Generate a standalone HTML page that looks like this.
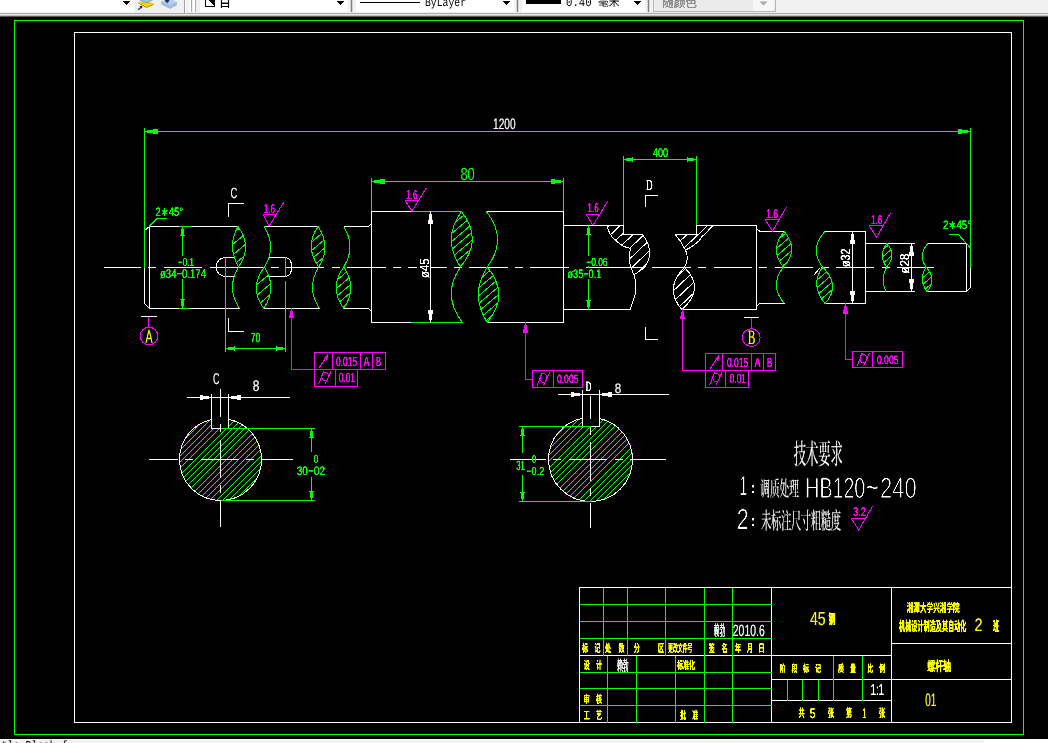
<!DOCTYPE html>
<html lang="zh-CN"><head><meta charset="utf-8"><title>螺杆轴 - CAD</title>
<style>
html,body{margin:0;padding:0;background:#000;overflow:hidden}
body{width:1048px;height:743px;position:relative}
svg{display:block}
svg text{white-space:pre}
</style></head>
<body>
<svg width="1048" height="743" viewBox="0 0 1048 743" style="position:absolute;left:0;top:0;will-change:transform" fill="none" stroke-width="1" shape-rendering="crispEdges" text-rendering="geometricPrecision">
<rect x="0" y="0" width="1048" height="743" fill="#000"/>
<rect x="14.5" y="20.5" width="1009" height="714" stroke="#00ff00"/>
<rect x="74.5" y="32.5" width="937" height="690" stroke="#ffffff"/>
<path d="M103.75 267.5H933.5" stroke="#ffffff" stroke-dasharray="38.6 7.3 8 7.2" stroke-dashoffset="1.25"/>
<rect x="571" y="266" width="15" height="3" fill="#000"/>
<rect x="417" y="266" width="13" height="3" fill="#000"/>
<path d="M209.5 267.5H225" stroke="#ffffff" />
<path d="M586 267.5H645" stroke="#ffffff" />
<path d="M144.5 303.5L144.5 230.5L149.5 226.5L238 226.5" stroke="#ffffff" />
<path d="M144.5 303.5L149.5 308.5L239.5 308.5" stroke="#ffffff" />
<path d="M149.5 226V309" stroke="#ffffff" />
<path d="M264.5 226.5H318" stroke="#ffffff" />
<path d="M263.75 308.5H319.5" stroke="#ffffff" />
<path d="M343.75 226.5L368.5 226.5L371.5 223.5" stroke="#ffffff" />
<path d="M343.75 308.5L368.5 308.5L371.5 311.5" stroke="#ffffff" />
<path d="M234 257.5H225.5A9.5 9.5 0 0 0 225.5 276.5H234" stroke="#ffffff"/>
<path d="M268.5 257.5H285.5A6.4 9.5 0 0 1 285.5 276.5H267" stroke="#ffffff"/>
<path d="M285.5 257V277" stroke="#ffffff" />
<path d="M411 211.5L371.5 211.5L371.5 322.5L411 322.5" stroke="#ffffff" />
<path d="M411 211.5H461.5" stroke="#00ff00" />
<path d="M411 322.5H462.5" stroke="#00ff00" />
<path d="M486.25 211.5L563.5 211.5L563.5 322.5L487.5 322.5" stroke="#ffffff" />
<path d="M563.5 225.5H623.5" stroke="#ffffff" />
<path d="M563.5 309.5H630" stroke="#ffffff" />
<path d="M623.5 225.5L623.5 234.5L642.4 234.5" stroke="#ffffff" />
<path d="M675.3 234.5L696.5 234.5L696.5 225.5L757 225.5" stroke="#ffffff" />
<path d="M682 309.5H757" stroke="#ffffff" />
<path d="M756.5 225.5L756.5 228.5L760 231.5L783.75 231.5" stroke="#ffffff" />
<path d="M756.5 309.5L756.5 306L760 303.5L784.5 303.5" stroke="#ffffff" />
<path d="M756.5 228V306" stroke="#ffffff" />
<path d="M823.75 231.5L865.5 231.5L865.5 303.5L825 303.5" stroke="#ffffff" />
<path d="M865.5 243.5H915" stroke="#ffffff" />
<path d="M865.5 291.5H915" stroke="#ffffff" />
<path d="M927.25 243.5L966.5 243.5L970.5 247.5L970.5 287.5L966.5 291.5L927.25 291.5" stroke="#ffffff" />
<path d="M966.5 243V292" stroke="#ffffff" />
<path d="M814 275L820 268" stroke="#ffffff" />
<clipPath id="c1"><path d="M238 226.5Q226.7 246.75 238.6 267Q252.7 246.75 238 226.5Z"/></clipPath>
<g clip-path="url(#c1)"><path d="M231.5 234.92L246.5 222.17M231.5 245.53L246.5 232.78M231.5 256.12L246.5 243.38M231.5 266.73L246.5 253.97M231.5 277.33L246.5 264.58" stroke="#00ff00"/></g>
<path d="M238 226.5Q226.7 246.75 238.6 267Q252.7 246.75 238 226.5Z" stroke="#00ff00"/>
<path d="M238.6 267Q225.95 287.75 239.5 308.5" stroke="#00ff00"/>
<path d="M264 226.5Q277 246.75 264.4 267" stroke="#00ff00"/>
<clipPath id="c2"><path d="M264.4 267Q248.525 287.75 263.75 308.5Q277.525 287.75 264.4 267Z"/></clipPath>
<g clip-path="url(#c2)"><path d="M255.3 275.39L271.8 261.37M255.3 286.00L271.8 271.97M255.3 296.60L271.8 282.57M255.3 307.20L271.8 293.17M255.3 317.79L271.8 303.77" stroke="#00ff00"/></g>
<path d="M264.4 267Q248.525 287.75 263.75 308.5Q277.525 287.75 264.4 267Z" stroke="#00ff00"/>
<clipPath id="c3"><path d="M318 226.5Q304.125 246.75 318.75 267Q331.625 246.75 318 226.5Z"/></clipPath>
<g clip-path="url(#c3)"><path d="M310.25 234.69L326 221.30M310.25 243.19L326 229.80M310.25 251.69L326 238.30M310.25 260.19L326 246.80M310.25 268.69L326 255.30M310.25 277.19L326 263.80" stroke="#00ff00"/></g>
<path d="M318 226.5Q304.125 246.75 318.75 267Q331.625 246.75 318 226.5Z" stroke="#00ff00"/>
<path d="M318.75 267Q305.875 287.75 319.5 308.5" stroke="#00ff00"/>
<path d="M343.75 226.5Q356.25 246.75 343.75 267" stroke="#00ff00"/>
<clipPath id="c4"><path d="M343.75 267Q328.75 287.75 343.75 308.5Q357.75 287.75 343.75 267Z"/></clipPath>
<g clip-path="url(#c4)"><path d="M335.25 273.54L351.75 259.51M335.25 281.54L351.75 267.51M335.25 289.54L351.75 275.51M335.25 297.54L351.75 283.51M335.25 305.54L351.75 291.51M335.25 313.54L351.75 299.51M335.25 321.54L351.75 307.51" stroke="#00ff00"/></g>
<path d="M343.75 267Q328.75 287.75 343.75 308.5Q357.75 287.75 343.75 267Z" stroke="#00ff00"/>
<clipPath id="c5"><path d="M461.5 211.5Q441.6 239.25 460.5 267Q483.6 239.25 461.5 211.5Z"/></clipPath>
<g clip-path="url(#c5)"><path d="M450.3 218.64L473.3 199.09M450.3 226.64L473.3 207.09M450.3 234.64L473.3 215.09M450.3 242.64L473.3 223.09M450.3 250.64L473.3 231.09M450.3 258.64L473.3 239.09M450.3 266.64L473.3 247.09M450.3 274.64L473.3 255.09M450.3 282.64L473.3 263.09" stroke="#00ff00"/></g>
<path d="M461.5 211.5Q441.6 239.25 460.5 267Q483.6 239.25 461.5 211.5Z" stroke="#00ff00"/>
<path d="M460.5 267Q441.15 294.75 462.4 322.5" stroke="#00ff00"/>
<path d="M486.4 211.5Q508.4 239.25 487.2 267" stroke="#00ff00"/>
<clipPath id="c6"><path d="M487.2 267Q469.6 294.75 487.2 322.5Q510.4 294.75 487.2 267Z"/></clipPath>
<g clip-path="url(#c6)"><path d="M477.4 273.41L499.8 254.37M477.4 281.21L499.8 262.17M477.4 289.01L499.8 269.97M477.4 296.81L499.8 277.77M477.4 304.61L499.8 285.57M477.4 312.41L499.8 293.37M477.4 320.21L499.8 301.17M477.4 328.01L499.8 308.97M477.4 335.81L499.8 316.77" stroke="#00ff00"/></g>
<path d="M487.2 267Q469.6 294.75 487.2 322.5Q510.4 294.75 487.2 267Z" stroke="#00ff00"/>
<clipPath id="c7"><path d="M784.2 231.5Q769 249.25 783.4 267Q799.6 249.25 784.2 231.5Z"/></clipPath>
<g clip-path="url(#c7)"><path d="M775.4 234.41L792.7 219.70M775.4 241.91L792.7 227.20M775.4 249.41L792.7 234.70M775.4 256.91L792.7 242.20M775.4 264.41L792.7 249.70M775.4 271.91L792.7 257.20M775.4 279.41L792.7 264.70" stroke="#00ff00"/></g>
<path d="M784.2 231.5Q769 249.25 783.4 267Q799.6 249.25 784.2 231.5Z" stroke="#00ff00"/>
<path d="M783.4 267Q769 285.25 784.2 303.5" stroke="#00ff00"/>
<path d="M824.8 231.5Q809.1 249.25 822.6 267" stroke="#00ff00"/>
<clipPath id="c8"><path d="M822.6 267Q809.75 285.25 825.1 303.5Q841.35 285.25 822.6 267Z"/></clipPath>
<g clip-path="url(#c8)"><path d="M815.8 273.57L833.6 258.44M815.8 281.07L833.6 265.94M815.8 288.57L833.6 273.44M815.8 296.07L833.6 280.94M815.8 303.57L833.6 288.44M815.8 311.07L833.6 295.94M815.8 318.57L833.6 303.44" stroke="#00ff00"/></g>
<path d="M822.6 267Q809.75 285.25 825.1 303.5Q841.35 285.25 822.6 267Z" stroke="#00ff00"/>
<clipPath id="c9"><path d="M886.9 243.5Q878.05 255.25 886.6 267Q897.05 255.25 886.9 243.5Z"/></clipPath>
<g clip-path="url(#c9)"><path d="M881.4 244.41L892.9 234.64M881.4 251.11L892.9 241.34M881.4 257.81L892.9 248.04M881.4 264.51L892.9 254.74M881.4 271.21L892.9 261.44" stroke="#00ff00"/></g>
<path d="M886.9 243.5Q878.05 255.25 886.6 267Q897.05 255.25 886.9 243.5Z" stroke="#00ff00"/>
<path d="M886.6 267Q880.1 279.25 886 291.5" stroke="#00ff00"/>
<path d="M927.8 243.5Q917.65 255.25 926.1 267" stroke="#00ff00"/>
<clipPath id="c10"><path d="M926.1 267Q918.05 279.25 927 291.5Q937.45 279.25 926.1 267Z"/></clipPath>
<g clip-path="url(#c10)"><path d="M921.3 272.20L933 262.25M921.3 278.90L933 268.95M921.3 285.60L933 275.65M921.3 292.30L933 282.35M921.3 299.00L933 289.05" stroke="#00ff00"/></g>
<path d="M926.1 267Q918.05 279.25 927 291.5Q937.45 279.25 926.1 267Z" stroke="#00ff00"/>
<clipPath id="wl"><path d="M606.85 225.5C608 229 609 231.5 610.1 234.1C611.8 237 614 239.3 616.5 241C618.3 242.8 620 244.4 622.2 245.5C624.5 246.8 627 247.8 629.9 248.3L630.7 249.5L629.5 252.3C629.2 254 629 256 629.1 258C629.2 260 629.5 262 629.9 263.6C630.3 265.4 630.8 267 631.5 268.5C632.2 270.8 633 273 633.9 275C636.4 273.4 638.6 271.8 640.8 270.1C642.3 269.2 643.7 268.2 644.8 266.9C646.2 265 647.3 262.8 648.1 260.4C649 258.4 649.6 256.2 649.7 253.9C649.8 251.8 649.5 249.5 648.9 247.5C648.5 245.2 647.6 243 646.4 241C645.4 238.6 644 236.5 642.4 234.5H623.5V225.5Z"/></clipPath>
<g clip-path="url(#wl)"><path d="M605 229.35L652 184.70M605 239.95L652 195.30M605 250.55L652 205.90M605 261.15L652 216.50M605 271.75L652 227.10M605 282.35L652 237.70M605 292.95L652 248.30M605 303.55L652 258.90M605 314.15L652 269.50" stroke="#ffffff"/></g>
<path d="M606.85 225.5C608 229 609 231.5 610.1 234.1C611.8 237 614 239.3 616.5 241C618.3 242.8 620 244.4 622.2 245.5C624.5 246.8 627 247.8 629.9 248.3L630.7 249.5L629.5 252.3C629.2 254 629 256 629.1 258C629.2 260 629.5 262 629.9 263.6C630.3 265.4 630.8 267 631.5 268.5C632.2 270.8 633 273 633.9 275C635.5 279 636.5 286 635.5 292.6C634.5 298 632 304 630 309.5" stroke="#ffffff"/>
<path d="M642.4 234.5C644 236.5 645.4 238.6 646.4 241C647.6 243 648.5 245.2 648.9 247.5C649.5 249.5 649.8 251.8 649.7 253.9C649.6 256.2 649 258.4 648.1 260.4C647.3 262.8 646.2 265 644.8 266.9C643.7 268.2 642.3 269.2 640.8 270.1C638.6 271.8 636.4 273.4 633.9 275" stroke="#ffffff"/>
<path d="M639 271.5L644 267.5" stroke="#ffffff" />
<clipPath id="wr"><path d="M675.3 234.5H696.5V225.5H712.9C711.8 226.6 710.8 227.7 709.7 228.8C708.4 230.3 707.2 231.8 705.9 233.3C704.6 234.3 703.4 235.4 702.1 236.4C701 237.9 700 239.4 699 240.9C697 242.7 695 244.4 692.7 245.9C690.5 247.5 688.2 248.9 685.4 250C683.8 247 682.2 244.2 680.6 241.5C678.8 239.2 677 236.9 675.3 234.5Z"/></clipPath>
<g clip-path="url(#wr)"><path d="M674 225.70L715 186.75M674 236.30L715 197.35M674 246.90L715 207.95M674 257.50L715 218.55M674 268.10L715 229.15M674 278.70L715 239.75M674 289.30L715 250.35" stroke="#ffffff"/></g>
<path d="M712.9 225.5C711.8 226.6 710.8 227.7 709.7 228.8C708.4 230.3 707.2 231.8 705.9 233.3C704.6 234.3 703.4 235.4 702.1 236.4C701 237.9 700 239.4 699 240.9C697 242.7 695 244.4 692.7 245.9C690.5 247.5 688.2 248.9 685.4 250" stroke="#ffffff"/>
<path d="M675.3 234.5C677 236.9 678.8 239.2 680.6 241.5C682.2 244.2 683.8 247 685.4 250C686.3 251.8 686.8 253.6 687 255.4C687.2 257 687.2 258.8 687 260.5C686.6 263 685.6 265.3 684.4 267.5" stroke="#ffffff"/>
<clipPath id="c11"><path d="M684.4 267.5Q663.45 288.5 681.9 309.5Q706.05 288.5 684.4 267.5Z"/></clipPath>
<g clip-path="url(#c11)"><path d="M672.3 270.22L695.6 248.08M672.3 281.02L695.6 258.88M672.3 291.82L695.6 269.68M672.3 302.62L695.6 280.48M672.3 313.42L695.6 291.28M672.3 324.22L695.6 302.08" stroke="#ffffff"/></g>
<path d="M684.4 267.5Q663.45 288.5 681.9 309.5Q706.05 288.5 684.4 267.5Z" stroke="#ffffff"/>
<path d="M144.5 128V267.5" stroke="#00ff00" />
<path d="M970.5 128V267.5" stroke="#00ff00" />
<path d="M144 131.5H971" stroke="#00ff00" />
<path d="M144.50 131.50L157.00 133.60L157.00 129.40Z" fill="#00ff00" stroke="#00ff00" stroke-width="1" stroke-linejoin="miter"/>
<path d="M970.50 131.50L958.00 129.40L958.00 133.60Z" fill="#00ff00" stroke="#00ff00" stroke-width="1" stroke-linejoin="miter"/>
<path d="M371.5 178V211" stroke="#00ff00" />
<path d="M563.5 178V211" stroke="#00ff00" />
<path d="M371 181.5H564" stroke="#00ff00" />
<path d="M371.50 181.50L384.00 183.60L384.00 179.40Z" fill="#00ff00" stroke="#00ff00" stroke-width="1" stroke-linejoin="miter"/>
<path d="M563.50 181.50L551.00 179.40L551.00 183.60Z" fill="#00ff00" stroke="#00ff00" stroke-width="1" stroke-linejoin="miter"/>
<path d="M623.5 156V225" stroke="#00ff00" />
<path d="M696.5 156V225" stroke="#00ff00" />
<path d="M623 159.5H697" stroke="#00ff00" />
<path d="M623.50 159.50L632.50 161.10L632.50 157.90Z" fill="#00ff00" stroke="#00ff00" stroke-width="1" stroke-linejoin="miter"/>
<path d="M696.50 159.50L687.50 157.90L687.50 161.10Z" fill="#00ff00" stroke="#00ff00" stroke-width="1" stroke-linejoin="miter"/>
<path d="M225.5 257V352" stroke="#00ff00" />
<path d="M285.5 257V277" stroke="#00ff00" />
<path d="M285.5 281V352" stroke="#00ff00" />
<path d="M225 348.5H286" stroke="#00ff00" />
<path d="M225.50 348.50L234.50 350.10L234.50 346.90Z" fill="#00ff00" stroke="#00ff00" stroke-width="1" stroke-linejoin="miter"/>
<path d="M285.50 348.50L276.50 346.90L276.50 350.10Z" fill="#00ff00" stroke="#00ff00" stroke-width="1" stroke-linejoin="miter"/>
<path d="M179 226.5H191" stroke="#00ff00" />
<path d="M179 308.5H190" stroke="#00ff00" />
<path d="M182.5 226V256" stroke="#00ff00" />
<path d="M182.5 278V308" stroke="#00ff00" />
<path d="M182.50 226.50L180.90 235.50L184.10 235.50Z" fill="#00ff00" stroke="#00ff00" stroke-width="1" stroke-linejoin="miter"/>
<path d="M182.50 308.50L184.10 299.50L180.90 299.50Z" fill="#00ff00" stroke="#00ff00" stroke-width="1" stroke-linejoin="miter"/>
<rect x="180" y="268" width="5" height="11" fill="#000"/>
<path d="M167 218.5L157 218.5L149 226.5" stroke="#00ff00" />
<path d="M948.5 234.5L958.5 234.5L970 247.5" stroke="#00ff00" />
<path d="M430.5 211V322" stroke="#ffffff" />
<path d="M430.50 211.50L428.40 223.50L432.60 223.50Z" fill="#ffffff" stroke="#ffffff" stroke-width="1" stroke-linejoin="miter"/>
<path d="M430.50 322.50L432.60 310.50L428.40 310.50Z" fill="#ffffff" stroke="#ffffff" stroke-width="1" stroke-linejoin="miter"/>
<path d="M588.5 225V309" stroke="#00ff00" />
<path d="M588.50 225.50L586.90 234.50L590.10 234.50Z" fill="#00ff00" stroke="#00ff00" stroke-width="1" stroke-linejoin="miter"/>
<path d="M588.50 309.50L590.10 300.50L586.90 300.50Z" fill="#00ff00" stroke="#00ff00" stroke-width="1" stroke-linejoin="miter"/>
<rect x="586" y="256" width="5" height="10" fill="#000"/>
<rect x="586" y="268" width="5" height="11" fill="#000"/>
<path d="M852.5 231V303" stroke="#ffffff" />
<path d="M852.50 231.50L850.40 243.50L854.60 243.50Z" fill="#ffffff" stroke="#ffffff" stroke-width="1" stroke-linejoin="miter"/>
<path d="M852.50 303.50L854.60 291.50L850.40 291.50Z" fill="#ffffff" stroke="#ffffff" stroke-width="1" stroke-linejoin="miter"/>
<path d="M911.5 243V291" stroke="#ffffff" />
<path d="M911.50 243.50L909.40 255.50L913.60 255.50Z" fill="#ffffff" stroke="#ffffff" stroke-width="1" stroke-linejoin="miter"/>
<path d="M911.50 291.50L913.60 279.50L909.40 279.50Z" fill="#ffffff" stroke="#ffffff" stroke-width="1" stroke-linejoin="miter"/>
<path d="M263.25 214.5H276.25" stroke="#ff00ff" />
<path d="M263.25 214.5L269.25 226L283.75 202.25" stroke="#ff00ff"/>
<path d="M405 200.5H418" stroke="#ff00ff" />
<path d="M405 200.5L412 211L426.25 188" stroke="#ff00ff"/>
<path d="M586.25 214.5H600" stroke="#ff00ff" />
<path d="M586.25 214.5L593 225.25L607.5 201.5" stroke="#ff00ff"/>
<path d="M765 219.5H778.75" stroke="#ff00ff" />
<path d="M765 219.5L772.5 231L786.25 207.25" stroke="#ff00ff"/>
<path d="M869.25 225.5H883.5" stroke="#ff00ff" />
<path d="M869.25 225.5L876.5 237.25L890.5 213" stroke="#ff00ff"/>
<path d="M851.25 518.5H866.25" stroke="#ff00ff" />
<path d="M851.25 518.5L858.75 530L872.5 506.25" stroke="#ff00ff"/>
<path d="M228.5 217L228.5 203.5L244 203.5" stroke="#ffffff" />
<path d="M228.5 318L228.5 331.5L244 331.5" stroke="#ffffff" />
<path d="M645.5 207L645.5 195.5L658 195.5" stroke="#ffffff" />
<path d="M645.5 326.5L645.5 339.5L658 339.5" stroke="#ffffff" />
<path d="M141 316.5H157" stroke="#ffffff" />
<path d="M148.5 317V327.2" stroke="#ff00ff" />
<circle cx="149" cy="336" r="8.8" stroke="#ff00ff"/>
<path d="M744 317.5H759" stroke="#ffffff" />
<path d="M751.5 318V328.7" stroke="#ff00ff" />
<circle cx="751.2" cy="337.6" r="8.9" stroke="#ff00ff"/>
<path d="M314.5 352.5H385.5V369.5H314.5Z M332.5 352.5V369.5 M360.5 352.5V369.5 M372.5 352.5V369.5" stroke="#ff00ff"/>
<path d="M314.5 369.5V386.5H357.5V369.5 M335.5 369.5V386.5" stroke="#ff00ff"/>
<path d="M319.4 367.5L328 354.4" stroke="#ff00ff"/>
<path d="M328 354.4L324.2 358.2L327.2 360Z" fill="#ff00ff" stroke="#ff00ff" stroke-width="0.5"/>
<ellipse cx="325.1" cy="376.4" rx="3.3" ry="4.4" stroke="#ff00ff"/>
<path d="M318.9 383.7L323.9 370.9M325.3 383.7L331.3 370.7" stroke="#ff00ff"/>
<path d="M291.5 308V369.5H314" stroke="#ff00ff"/>
<path d="M291.50 308.50L289.60 317.50L293.40 317.50Z" fill="#ff00ff" stroke="#ff00ff" stroke-width="1" stroke-linejoin="miter"/>
<path d="M705.5 353.5H775.5V370.5H705.5Z M722.5 353.5V370.5 M751.5 353.5V370.5 M763.5 353.5V370.5" stroke="#ff00ff"/>
<path d="M705.5 370.5V387.5H748.5V370.5 M725.5 370.5V387.5" stroke="#ff00ff"/>
<path d="M710.4 368.5L719 355.4" stroke="#ff00ff"/>
<path d="M719 355.4L715.2 359.2L718.2 361Z" fill="#ff00ff" stroke="#ff00ff" stroke-width="0.5"/>
<ellipse cx="716.1" cy="377.4" rx="3.3" ry="4.4" stroke="#ff00ff"/>
<path d="M709.9 384.7L714.9 371.9M716.3 384.7L722.3 371.7" stroke="#ff00ff"/>
<path d="M682.5 309V370.5H705" stroke="#ff00ff"/>
<path d="M682.50 309.50L680.60 318.50L684.40 318.50Z" fill="#ff00ff" stroke="#ff00ff" stroke-width="1" stroke-linejoin="miter"/>
<path d="M532.5 370.5H582.5V387.5H532.5Z M553.5 370.5V387.5" stroke="#ff00ff"/>
<ellipse cx="543.4" cy="378.1" rx="3.3" ry="4.4" stroke="#ff00ff"/>
<path d="M537.2 385.4L542.2 372.6M543.6 385.4L549.6 372.4" stroke="#ff00ff"/>
<path d="M525.5 322V379.5H532" stroke="#ff00ff"/>
<path d="M525.50 322.50L523.50 332.00L527.50 332.00Z" fill="#ff00ff" stroke="#ff00ff" stroke-width="1" stroke-linejoin="miter"/>
<path d="M852.5 351.5H902.5V367.5H852.5Z M872.5 351.5V367.5" stroke="#ff00ff"/>
<ellipse cx="863.4" cy="358.6" rx="3.3" ry="4.4" stroke="#ff00ff"/>
<path d="M857.2 365.9L862.2 353.1M863.6 365.9L869.6 352.9" stroke="#ff00ff"/>
<path d="M845.5 303V359.5H852" stroke="#ff00ff"/>
<path d="M845.50 303.50L843.50 313.00L847.50 313.00Z" fill="#ff00ff" stroke="#ff00ff" stroke-width="1" stroke-linejoin="miter"/>
<clipPath id="c12"><path d="M179.5 459.5A41 41 0 1 0 261.5 459.5A41 41 0 0 0 228.5 419.29V428.5H211.5V419.50A41 41 0 0 0 179.5 459.5Z"/></clipPath>
<g clip-path="url(#c12)"><path d="M178.5 420.50L262.5 336.50M178.5 426.50L262.5 342.50M178.5 432.50L262.5 348.50M178.5 438.50L262.5 354.50M178.5 445.50L262.5 361.50M178.5 451.50L262.5 367.50M178.5 457.50L262.5 373.50M178.5 463.50L262.5 379.50M178.5 469.50L262.5 385.50M178.5 476.50L262.5 392.50M178.5 482.50L262.5 398.50M178.5 488.50L262.5 404.50M178.5 494.50L262.5 410.50M178.5 500.50L262.5 416.50M178.5 507.50L262.5 423.50M178.5 513.50L262.5 429.50M178.5 519.50L262.5 435.50M178.5 525.50L262.5 441.50M178.5 531.50L262.5 447.50M178.5 538.50L262.5 454.50M178.5 544.50L262.5 460.50M178.5 550.50L262.5 466.50M178.5 556.50L262.5 472.50M178.5 562.50L262.5 478.50M178.5 569.50L262.5 485.50M178.5 575.50L262.5 491.50M178.5 581.50L262.5 497.50" stroke="#00ff00"/></g>
<path d="M179.5 459.5A41 41 0 1 0 261.5 459.5A41 41 0 0 0 228.5 419.29V428.5H211.5V419.50A41 41 0 0 0 179.5 459.5Z" stroke="#ffffff"/>
<path d="M211.5 394V428.5" stroke="#ffffff" />
<path d="M228.5 394V428.5" stroke="#ffffff" />
<clipPath id="c13"><path d="M548.5 459.5A42 42 0 1 0 632.5 459.5A42 42 0 0 0 599.5 418.48V426.5H582.5V418.27A42 42 0 0 0 548.5 459.5Z"/></clipPath>
<g clip-path="url(#c13)"><path d="M547.5 419.50L633.5 333.50M547.5 425.50L633.5 339.50M547.5 431.50L633.5 345.50M547.5 438.50L633.5 352.50M547.5 444.50L633.5 358.50M547.5 450.50L633.5 364.50M547.5 456.50L633.5 370.50M547.5 462.50L633.5 376.50M547.5 469.50L633.5 383.50M547.5 475.50L633.5 389.50M547.5 481.50L633.5 395.50M547.5 487.50L633.5 401.50M547.5 493.50L633.5 407.50M547.5 500.50L633.5 414.50M547.5 506.50L633.5 420.50M547.5 512.50L633.5 426.50M547.5 518.50L633.5 432.50M547.5 524.50L633.5 438.50M547.5 531.50L633.5 445.50M547.5 537.50L633.5 451.50M547.5 543.50L633.5 457.50M547.5 549.50L633.5 463.50M547.5 555.50L633.5 469.50M547.5 562.50L633.5 476.50M547.5 568.50L633.5 482.50M547.5 574.50L633.5 488.50M547.5 580.50L633.5 494.50M547.5 586.50L633.5 500.50" stroke="#00ff00"/></g>
<path d="M548.5 459.5A42 42 0 1 0 632.5 459.5A42 42 0 0 0 599.5 418.48V426.5H582.5V418.27A42 42 0 0 0 548.5 459.5Z" stroke="#ffffff"/>
<path d="M582.5 389.5V426.5" stroke="#ffffff" />
<path d="M599.5 389.5V426.5" stroke="#ffffff" />
<path d="M149 459.5H292.5" stroke="#ffffff" stroke-dasharray="38.6 7.3 8 7.2" stroke-dashoffset="9.6"/>
<path d="M220.5 389V526.5" stroke="#ffffff" stroke-dasharray="38.6 7.3 8 7.2" stroke-dashoffset="10.6"/>
<path d="M187 397.5H289.5" stroke="#ffffff" />
<path d="M211.50 397.50L200.00 395.50L200.00 399.50Z" fill="#ffffff" stroke="#ffffff" stroke-width="1" stroke-linejoin="miter"/>
<path d="M228.50 397.50L240.00 399.50L240.00 395.50Z" fill="#ffffff" stroke="#ffffff" stroke-width="1" stroke-linejoin="miter"/>
<path d="M220.5 428.5H315" stroke="#00ff00" />
<path d="M220.5 500.5H315" stroke="#00ff00" />
<path d="M311.5 428V452" stroke="#00ff00" />
<path d="M311.5 476.5V500" stroke="#00ff00" />
<path d="M311.50 428.50L309.90 437.50L313.10 437.50Z" fill="#00ff00" stroke="#00ff00" stroke-width="1" stroke-linejoin="miter"/>
<path d="M311.50 500.50L313.10 491.50L309.90 491.50Z" fill="#00ff00" stroke="#00ff00" stroke-width="1" stroke-linejoin="miter"/>
<path d="M510 459.5H665.5" stroke="#ffffff" stroke-dasharray="38.6 7.3 8 7.2" stroke-dashoffset="2.5"/>
<path d="M590.5 396.25V527.5" stroke="#ffffff" stroke-dasharray="38.6 7.3 8 7.2" stroke-dashoffset="15.4"/>
<path d="M558.25 394.5H668.75" stroke="#ffffff" />
<path d="M582.50 394.50L571.00 392.50L571.00 396.50Z" fill="#ffffff" stroke="#ffffff" stroke-width="1" stroke-linejoin="miter"/>
<path d="M599.50 394.50L611.00 396.50L611.00 392.50Z" fill="#ffffff" stroke="#ffffff" stroke-width="1" stroke-linejoin="miter"/>
<path d="M519.25 426.5H590.5" stroke="#00ff00" />
<path d="M519.25 501.5H590.5" stroke="#00ff00" />
<path d="M522.5 426V453" stroke="#00ff00" />
<path d="M522.5 475V501" stroke="#00ff00" />
<path d="M522.50 426.50L520.90 435.50L524.10 435.50Z" fill="#00ff00" stroke="#00ff00" stroke-width="1" stroke-linejoin="miter"/>
<path d="M522.50 501.50L524.10 492.50L520.90 492.50Z" fill="#00ff00" stroke="#00ff00" stroke-width="1" stroke-linejoin="miter"/>
<path d="M579.5 587.5H1011.5" stroke="#ffffff" />
<path d="M579.5 587V723" stroke="#ffffff" />
<path d="M771.5 587V723" stroke="#ffffff" />
<path d="M891.5 587V723" stroke="#ffffff" />
<path d="M579.5 655.5H891.5" stroke="#ffffff" />
<path d="M771.5 679.5H1011.5" stroke="#ffffff" />
<path d="M771.5 700.5H891.5" stroke="#ffffff" />
<path d="M891.5 643.5H1011.5" stroke="#ffffff" />
<path d="M579.5 604.5H771.5" stroke="#00ff00" />
<path d="M579.5 621.5H771.5" stroke="#00ff00" />
<path d="M579.5 638.5H771.5" stroke="#00ff00" />
<path d="M603.5 587.5V655.5" stroke="#00ff00" />
<path d="M627.5 587.5V655.5" stroke="#00ff00" />
<path d="M665.5 587.5V655.5" stroke="#00ff00" />
<path d="M704.5 587.5V655.5" stroke="#00ff00" />
<path d="M732.5 587.5V655.5" stroke="#00ff00" />
<path d="M579.5 672.5H771.5" stroke="#00ff00" />
<path d="M579.5 688.5H771.5" stroke="#00ff00" />
<path d="M579.5 705.5H771.5" stroke="#00ff00" />
<path d="M607.5 655.5V722.5" stroke="#00ff00" />
<path d="M636.5 655.5V722.5" stroke="#00ff00" />
<path d="M675.5 655.5V722.5" stroke="#00ff00" />
<path d="M704.5 655.5V722.5" stroke="#00ff00" />
<path d="M732.5 655.5V722.5" stroke="#00ff00" />
<path d="M833.5 655.5V700.5" stroke="#00ff00" />
<path d="M862.5 655.5V700.5" stroke="#00ff00" />
<path d="M787.5 679.5V700.5" stroke="#00ff00" />
<path d="M802.5 679.5V700.5" stroke="#00ff00" />
<path d="M818.5 679.5V700.5" stroke="#00ff00" />
<filter id="crisp" x="0" y="0" width="1048" height="743" filterUnits="userSpaceOnUse" color-interpolation-filters="sRGB"><feComponentTransfer><feFuncA type="linear" slope="2.2" intercept="-0.12"/></feComponentTransfer></filter>
<g filter="url(#crisp)">
<text x="653" y="157" font-size="12.57" fill="#00ff00" font-family="'Liberation Sans',sans-serif" textLength="15" lengthAdjust="spacingAndGlyphs" >400</text>
<text x="250.75" y="341.5" font-size="13.27" fill="#00ff00" font-family="'Liberation Sans',sans-serif" textLength="9.5" lengthAdjust="spacingAndGlyphs" >70</text>
<text x="178" y="265.8" font-size="11.59" fill="#00ff00" font-family="'Liberation Sans',sans-serif" textLength="16" lengthAdjust="spacingAndGlyphs" >−0.1</text>
<text x="160" y="277.7" font-size="12.85" fill="#00ff00" font-family="'Liberation Sans',sans-serif" textLength="46" lengthAdjust="spacingAndGlyphs" >ø34−0.174</text>
<text x="155.6" y="216.05" font-size="12.29" fill="#00ff00" font-family="'Liberation Sans',sans-serif" textLength="27.5" lengthAdjust="spacingAndGlyphs" >2∗45°</text>
<text x="943" y="229.3" font-size="12.29" fill="#00ff00" font-family="'Liberation Sans',sans-serif" textLength="28" lengthAdjust="spacingAndGlyphs" >2∗45°</text>
<text transform="translate(428.8 278) rotate(-90)" font-size="12.99" fill="#ffffff" font-family="'Liberation Sans',sans-serif" textLength="19.5" lengthAdjust="spacingAndGlyphs">ø45</text>
<text x="586.25" y="265.55" font-size="11.59" fill="#00ff00" font-family="'Liberation Sans',sans-serif" textLength="21.25" lengthAdjust="spacingAndGlyphs" >−0.06</text>
<text x="567.5" y="278.05" font-size="12.29" fill="#00ff00" font-family="'Liberation Sans',sans-serif" textLength="33.75" lengthAdjust="spacingAndGlyphs" >ø35−0.1</text>
<text transform="translate(849.5 267) rotate(-90)" font-size="13.27" fill="#ffffff" font-family="'Liberation Sans',sans-serif" textLength="18.5" lengthAdjust="spacingAndGlyphs">ø32</text>
<text transform="translate(909.05 273.5) rotate(-90)" font-size="12.99" fill="#ffffff" font-family="'Liberation Sans',sans-serif" textLength="20" lengthAdjust="spacingAndGlyphs">ø28</text>
<text x="263.75" y="213.05" font-size="12.57" fill="#ff00ff" font-family="'Liberation Sans',sans-serif" textLength="11.25" lengthAdjust="spacingAndGlyphs" >1.6</text>
<text x="406" y="198.8" font-size="12.57" fill="#ff00ff" font-family="'Liberation Sans',sans-serif" textLength="11.5" lengthAdjust="spacingAndGlyphs" >1.6</text>
<text x="587.5" y="212.3" font-size="12.57" fill="#ff00ff" font-family="'Liberation Sans',sans-serif" textLength="11.25" lengthAdjust="spacingAndGlyphs" >1.6</text>
<text x="766.25" y="218.05" font-size="12.57" fill="#ff00ff" font-family="'Liberation Sans',sans-serif" textLength="11.75" lengthAdjust="spacingAndGlyphs" >1.6</text>
<text x="871" y="223.8" font-size="12.57" fill="#ff00ff" font-family="'Liberation Sans',sans-serif" textLength="11.25" lengthAdjust="spacingAndGlyphs" >1.6</text>
<text x="853" y="516.3" font-size="12.57" fill="#ff00ff" font-family="'Liberation Sans',sans-serif" textLength="13" lengthAdjust="spacingAndGlyphs" >3.2</text>
<text x="646.25" y="189.5" font-size="15.15" fill="#ffffff" font-family="'Liberation Serif',serif" textLength="6.25" lengthAdjust="spacingAndGlyphs" >D</text>
<text x="336" y="365.5" font-size="13.27" fill="#ff00ff" font-family="'Liberation Sans',sans-serif" textLength="21.2" lengthAdjust="spacingAndGlyphs" >0.015</text>
<text x="363.5" y="365.5" font-size="13.27" fill="#ff00ff" font-family="'Liberation Sans',sans-serif" textLength="6" lengthAdjust="spacingAndGlyphs" >A</text>
<text x="376" y="365.5" font-size="13.27" fill="#ff00ff" font-family="'Liberation Sans',sans-serif" textLength="5.2" lengthAdjust="spacingAndGlyphs" >B</text>
<text x="338.7" y="382" font-size="13.27" fill="#ff00ff" font-family="'Liberation Sans',sans-serif" textLength="16.3" lengthAdjust="spacingAndGlyphs" >0.01</text>
<text x="727" y="366.5" font-size="13.27" fill="#ff00ff" font-family="'Liberation Sans',sans-serif" textLength="21.2" lengthAdjust="spacingAndGlyphs" >0.015</text>
<text x="754.5" y="366.5" font-size="13.27" fill="#ff00ff" font-family="'Liberation Sans',sans-serif" textLength="6" lengthAdjust="spacingAndGlyphs" >A</text>
<text x="767" y="366.5" font-size="13.27" fill="#ff00ff" font-family="'Liberation Sans',sans-serif" textLength="5.2" lengthAdjust="spacingAndGlyphs" >B</text>
<text x="729.7" y="383" font-size="13.27" fill="#ff00ff" font-family="'Liberation Sans',sans-serif" textLength="16.3" lengthAdjust="spacingAndGlyphs" >0.01</text>
<text x="556.9" y="383.1" font-size="12.15" fill="#ff00ff" font-family="'Liberation Sans',sans-serif" textLength="21.6" lengthAdjust="spacingAndGlyphs" >0.005</text>
<text x="876.9" y="364.1" font-size="12.15" fill="#ff00ff" font-family="'Liberation Sans',sans-serif" textLength="21.6" lengthAdjust="spacingAndGlyphs" >0.005</text>
<text x="313.75" y="463" font-size="11.87" fill="#00ff00" font-family="'Liberation Sans',sans-serif" textLength="4.4" lengthAdjust="spacingAndGlyphs" >0</text>
<text x="296.75" y="475.05" font-size="12.29" fill="#00ff00" font-family="'Liberation Sans',sans-serif" textLength="28.25" lengthAdjust="spacingAndGlyphs" >30−02</text>
<text x="585.75" y="390.55" font-size="14.09" fill="#ffffff" font-family="'Liberation Serif',serif" textLength="5.5" lengthAdjust="spacingAndGlyphs" >D</text>
<text x="532" y="462.5" font-size="11.17" fill="#00ff00" font-family="'Liberation Sans',sans-serif" textLength="4.25" lengthAdjust="spacingAndGlyphs" >0</text>
<text x="516.25" y="469.5" font-size="13.27" fill="#00ff00" font-family="'Liberation Sans',sans-serif" textLength="8.75" lengthAdjust="spacingAndGlyphs" >31</text>
<text x="526.25" y="474.55" font-size="11.59" fill="#00ff00" font-family="'Liberation Sans',sans-serif" textLength="18" lengthAdjust="spacingAndGlyphs" >−0.2</text>
<text x="751.2" y="493.3" font-size="15.36" fill="#ffffff" font-family="'Liberation Sans',sans-serif" textLength="3.6" lengthAdjust="spacingAndGlyphs" font-weight="bold" >:</text>
<text x="751.2" y="526.3" font-size="15.36" fill="#ffffff" font-family="'Liberation Sans',sans-serif" textLength="3.6" lengthAdjust="spacingAndGlyphs" font-weight="bold" >:</text>
<text x="582" y="652.063" font-size="10.92" fill="#ffff00" font-family="'Liberation Sans','Noto Sans CJK SC',sans-serif" textLength="6" lengthAdjust="spacingAndGlyphs" font-weight="500">标</text>
<text x="594.5" y="652.063" font-size="10.92" fill="#ffff00" font-family="'Liberation Sans','Noto Sans CJK SC',sans-serif" textLength="6" lengthAdjust="spacingAndGlyphs" font-weight="500">记</text>
<text x="605" y="652.063" font-size="10.92" fill="#ffff00" font-family="'Liberation Sans','Noto Sans CJK SC',sans-serif" textLength="6" lengthAdjust="spacingAndGlyphs" font-weight="500">处</text>
<text x="618.5" y="652.063" font-size="10.92" fill="#ffff00" font-family="'Liberation Sans','Noto Sans CJK SC',sans-serif" textLength="6" lengthAdjust="spacingAndGlyphs" font-weight="500">数</text>
<text x="633.75" y="652.063" font-size="10.92" fill="#ffff00" font-family="'Liberation Sans','Noto Sans CJK SC',sans-serif" textLength="6" lengthAdjust="spacingAndGlyphs" font-weight="500">分</text>
<text x="658" y="652.063" font-size="10.92" fill="#ffff00" font-family="'Liberation Sans','Noto Sans CJK SC',sans-serif" textLength="6" lengthAdjust="spacingAndGlyphs" font-weight="500">区</text>
<text x="668" y="652.063" font-size="10.92" fill="#ffff00" font-family="'Liberation Sans','Noto Sans CJK SC',sans-serif" textLength="24.5" lengthAdjust="spacingAndGlyphs" font-weight="500">更改文件号</text>
<text x="708.75" y="652.063" font-size="10.92" fill="#ffff00" font-family="'Liberation Sans','Noto Sans CJK SC',sans-serif" textLength="6" lengthAdjust="spacingAndGlyphs" font-weight="500">签</text>
<text x="721.5" y="652.063" font-size="10.92" fill="#ffff00" font-family="'Liberation Sans','Noto Sans CJK SC',sans-serif" textLength="6" lengthAdjust="spacingAndGlyphs" font-weight="500">名</text>
<text x="735" y="652.063" font-size="10.92" fill="#ffff00" font-family="'Liberation Sans','Noto Sans CJK SC',sans-serif" textLength="6" lengthAdjust="spacingAndGlyphs" font-weight="500">年</text>
<text x="747" y="652.063" font-size="10.92" fill="#ffff00" font-family="'Liberation Sans','Noto Sans CJK SC',sans-serif" textLength="6" lengthAdjust="spacingAndGlyphs" font-weight="500">月</text>
<text x="758.5" y="652.063" font-size="10.92" fill="#ffff00" font-family="'Liberation Sans','Noto Sans CJK SC',sans-serif" textLength="6" lengthAdjust="spacingAndGlyphs" font-weight="500">日</text>
<text x="583.75" y="669.063" font-size="10.92" fill="#ffff00" font-family="'Liberation Sans','Noto Sans CJK SC',sans-serif" textLength="6" lengthAdjust="spacingAndGlyphs" font-weight="500">设</text>
<text x="596" y="669.063" font-size="10.92" fill="#ffff00" font-family="'Liberation Sans','Noto Sans CJK SC',sans-serif" textLength="6" lengthAdjust="spacingAndGlyphs" font-weight="500">计</text>
<text x="677" y="669.063" font-size="10.92" fill="#ffff00" font-family="'Liberation Sans','Noto Sans CJK SC',sans-serif" textLength="18" lengthAdjust="spacingAndGlyphs" font-weight="500">标准化</text>
<text x="583.75" y="702.563" font-size="10.92" fill="#ffff00" font-family="'Liberation Sans','Noto Sans CJK SC',sans-serif" textLength="6" lengthAdjust="spacingAndGlyphs" font-weight="500">审</text>
<text x="596" y="702.563" font-size="10.92" fill="#ffff00" font-family="'Liberation Sans','Noto Sans CJK SC',sans-serif" textLength="6" lengthAdjust="spacingAndGlyphs" font-weight="500">核</text>
<text x="583.75" y="719.063" font-size="10.92" fill="#ffff00" font-family="'Liberation Sans','Noto Sans CJK SC',sans-serif" textLength="6" lengthAdjust="spacingAndGlyphs" font-weight="500">工</text>
<text x="596" y="719.063" font-size="10.92" fill="#ffff00" font-family="'Liberation Sans','Noto Sans CJK SC',sans-serif" textLength="6" lengthAdjust="spacingAndGlyphs" font-weight="500">艺</text>
<text x="680" y="719.063" font-size="10.92" fill="#ffff00" font-family="'Liberation Sans','Noto Sans CJK SC',sans-serif" textLength="6" lengthAdjust="spacingAndGlyphs" font-weight="500">批</text>
<text x="692.25" y="719.063" font-size="10.92" fill="#ffff00" font-family="'Liberation Sans','Noto Sans CJK SC',sans-serif" textLength="6" lengthAdjust="spacingAndGlyphs" font-weight="500">准</text>
<text x="617" y="670.652" font-size="14.94" fill="#ffffff" font-family="'Liberation Serif','Noto Serif CJK SC',serif" textLength="11.75" lengthAdjust="spacingAndGlyphs">赖勃</text>
<text x="713.75" y="636.391" font-size="15.23" fill="#ffffff" font-family="'Liberation Serif','Noto Serif CJK SC',serif" textLength="11.25" lengthAdjust="spacingAndGlyphs">赖勃</text>
<text x="828.5" y="624.448" font-size="13.79" fill="#ffff00" font-family="'Liberation Sans','Noto Sans CJK SC',sans-serif" textLength="7" lengthAdjust="spacingAndGlyphs" font-weight="bold">钢</text>
<text x="779.5" y="672.098" font-size="10.06" fill="#ffff00" font-family="'Liberation Sans','Noto Sans CJK SC',sans-serif" textLength="6" lengthAdjust="spacingAndGlyphs" font-weight="500">阶</text>
<text x="791.5" y="672.098" font-size="10.06" fill="#ffff00" font-family="'Liberation Sans','Noto Sans CJK SC',sans-serif" textLength="6" lengthAdjust="spacingAndGlyphs" font-weight="500">段</text>
<text x="803" y="672.098" font-size="10.06" fill="#ffff00" font-family="'Liberation Sans','Noto Sans CJK SC',sans-serif" textLength="6" lengthAdjust="spacingAndGlyphs" font-weight="500">标</text>
<text x="815" y="672.098" font-size="10.06" fill="#ffff00" font-family="'Liberation Sans','Noto Sans CJK SC',sans-serif" textLength="6" lengthAdjust="spacingAndGlyphs" font-weight="500">记</text>
<text x="838" y="672.098" font-size="10.06" fill="#ffff00" font-family="'Liberation Sans','Noto Sans CJK SC',sans-serif" textLength="6" lengthAdjust="spacingAndGlyphs" font-weight="500">质</text>
<text x="850" y="672.098" font-size="10.06" fill="#ffff00" font-family="'Liberation Sans','Noto Sans CJK SC',sans-serif" textLength="6" lengthAdjust="spacingAndGlyphs" font-weight="500">量</text>
<text x="867.25" y="672.098" font-size="10.06" fill="#ffff00" font-family="'Liberation Sans','Noto Sans CJK SC',sans-serif" textLength="6" lengthAdjust="spacingAndGlyphs" font-weight="500">比</text>
<text x="879.25" y="672.098" font-size="10.06" fill="#ffff00" font-family="'Liberation Sans','Noto Sans CJK SC',sans-serif" textLength="6" lengthAdjust="spacingAndGlyphs" font-weight="500">例</text>
<text x="870.5" y="695" font-size="15.71" fill="#ffffff" font-family="'Liberation Sans',sans-serif" textLength="13.5" lengthAdjust="spacingAndGlyphs" >1:1</text>
<text x="798.5" y="717.04" font-size="11.49" fill="#ffff00" font-family="'Liberation Sans','Noto Sans CJK SC',sans-serif" textLength="6.25" lengthAdjust="spacingAndGlyphs" font-weight="500">共</text>
<text x="809.75" y="717.5" font-size="13.97" fill="#ffff00" font-family="'Liberation Sans',sans-serif" textLength="5.75" lengthAdjust="spacingAndGlyphs" >5</text>
<text x="828" y="717.04" font-size="11.49" fill="#ffff00" font-family="'Liberation Sans','Noto Sans CJK SC',sans-serif" textLength="6" lengthAdjust="spacingAndGlyphs" font-weight="500">张</text>
<text x="846" y="717.04" font-size="11.49" fill="#ffff00" font-family="'Liberation Sans','Noto Sans CJK SC',sans-serif" textLength="6" lengthAdjust="spacingAndGlyphs" font-weight="500">第</text>
<text x="862.5" y="717.5" font-size="13.97" fill="#ffff00" font-family="'Liberation Sans',sans-serif" textLength="3.5" lengthAdjust="spacingAndGlyphs" >1</text>
<text x="879" y="717.04" font-size="11.49" fill="#ffff00" font-family="'Liberation Sans','Noto Sans CJK SC',sans-serif" textLength="6.25" lengthAdjust="spacingAndGlyphs" font-weight="500">张</text>
<text x="906.75" y="611.529" font-size="11.78" fill="#ffff00" font-family="'Liberation Sans','Noto Sans CJK SC',sans-serif" textLength="53" lengthAdjust="spacingAndGlyphs" font-weight="500">湘潭大学兴湘学院</text>
<text x="899" y="630.71" font-size="13.51" fill="#ffff00" font-family="'Liberation Sans','Noto Sans CJK SC',sans-serif" textLength="67.5" lengthAdjust="spacingAndGlyphs" font-weight="500">机械设计制造及其自动化</text>
<text x="993" y="630.71" font-size="13.51" fill="#ffff00" font-family="'Liberation Sans','Noto Sans CJK SC',sans-serif" textLength="6" lengthAdjust="spacingAndGlyphs" font-weight="500">班</text>
<text x="927.25" y="670.71" font-size="13.51" fill="#ffff00" font-family="'Liberation Sans','Noto Sans CJK SC',sans-serif" textLength="23.75" lengthAdjust="spacingAndGlyphs" font-weight="500">螺杆轴</text>
</g>
<filter id="boost" x="0" y="0" width="1048" height="743" filterUnits="userSpaceOnUse" color-interpolation-filters="sRGB"><feComponentTransfer><feFuncR type="linear" slope="2.4" intercept="-0.1"/><feFuncG type="linear" slope="2.4" intercept="-0.1"/><feFuncB type="linear" slope="2.4" intercept="-0.1"/></feComponentTransfer></filter>
<g filter="url(#boost)">
<text x="493.075" y="128.925" font-size="15.15" fill="#ffffff" font-family="'Liberation Sans',sans-serif" textLength="22.6" lengthAdjust="spacingAndGlyphs" stroke="#000" stroke-width="0.35" >1200</text>
<text x="460.45" y="179.8" font-size="17.60" fill="#00ff00" font-family="'Liberation Sans',sans-serif" textLength="14.35" lengthAdjust="spacingAndGlyphs" stroke="#000" stroke-width="0.6" >80</text>
<text x="230.425" y="198.125" font-size="14.73" fill="#ffffff" font-family="'Liberation Sans',sans-serif" textLength="6.75" lengthAdjust="spacingAndGlyphs" stroke="#000" stroke-width="0.35" >C</text>
<text x="145.45" y="343.35" font-size="19.13" fill="#ffff00" font-family="'Liberation Sans',sans-serif" textLength="7.1" lengthAdjust="spacingAndGlyphs" stroke="#000" stroke-width="0.7" >A</text>
<text x="747.8" y="344.2" font-size="20.46" fill="#ffff00" font-family="'Liberation Serif',serif" textLength="7.6" lengthAdjust="spacingAndGlyphs" stroke="#000" stroke-width="0.4" >B</text>
<text x="213.075" y="383.975" font-size="15.57" fill="#ffffff" font-family="'Liberation Sans',sans-serif" textLength="6.55" lengthAdjust="spacingAndGlyphs" stroke="#000" stroke-width="0.35" >C</text>
<text x="252.825" y="390.975" font-size="15.57" fill="#ffffff" font-family="'Liberation Sans',sans-serif" textLength="6.6" lengthAdjust="spacingAndGlyphs" stroke="#000" stroke-width="0.35" >8</text>
<text x="614.725" y="392.775" font-size="13.76" fill="#ffffff" font-family="'Liberation Sans',sans-serif" textLength="6.45" lengthAdjust="spacingAndGlyphs" stroke="#000" stroke-width="0.35" >8</text>
<text x="793.75" y="464.124" font-size="28.16" fill="#ffffff" font-family="'Liberation Serif','Noto Serif CJK SC',serif" textLength="49.1" lengthAdjust="spacingAndGlyphs" stroke="#000" stroke-width="0.5">技术要求</text>
<text x="739.9" y="495.1" font-size="27.51" fill="#ffffff" font-family="'Liberation Sans',sans-serif" textLength="6.7" lengthAdjust="spacingAndGlyphs" stroke="#000" stroke-width="1.2" >1</text>
<text x="760.275" y="496.391" font-size="20.86" fill="#ffffff" font-family="'Liberation Serif','Noto Serif CJK SC',serif" textLength="38.65" lengthAdjust="spacingAndGlyphs" stroke="#000" stroke-width="0.45">调质处理</text>
<text x="805.3" y="497.7" font-size="29.33" fill="#ffffff" font-family="'Liberation Sans',sans-serif" textLength="59.9" lengthAdjust="spacingAndGlyphs" stroke="#000" stroke-width="1.4" >HB120</text>
<text x="866.05" y="497.45" font-size="28.63" fill="#ffffff" font-family="'Liberation Sans',sans-serif" textLength="12.4" lengthAdjust="spacingAndGlyphs" stroke="#000" stroke-width="0.9" >~</text>
<text x="880.1" y="497.7" font-size="29.33" fill="#ffffff" font-family="'Liberation Sans',sans-serif" textLength="36.6" lengthAdjust="spacingAndGlyphs" stroke="#000" stroke-width="1.4" >240</text>
<text x="736.65" y="528.6" font-size="28.91" fill="#ffffff" font-family="'Liberation Sans',sans-serif" textLength="11.95" lengthAdjust="spacingAndGlyphs" stroke="#000" stroke-width="1.2" >2</text>
<text x="761.275" y="528.799" font-size="23.16" fill="#ffffff" font-family="'Liberation Serif','Noto Serif CJK SC',serif" textLength="79.65" lengthAdjust="spacingAndGlyphs" stroke="#000" stroke-width="0.45">未标注尺寸粗糙度</text>
<text x="732.8" y="636.45" font-size="16.27" fill="#ffffff" font-family="'Liberation Sans',sans-serif" textLength="31.9" lengthAdjust="spacingAndGlyphs" stroke="#000" stroke-width="0.4" >2010.6</text>
<text x="810" y="625.25" font-size="18.85" fill="#ffff00" font-family="'Liberation Sans',sans-serif" textLength="15.75" lengthAdjust="spacingAndGlyphs" stroke="#000" stroke-width="0.5" >45</text>
<text x="974.5" y="631" font-size="18.16" fill="#ffff00" font-family="'Liberation Sans',sans-serif" textLength="8" lengthAdjust="spacingAndGlyphs" stroke="#000" stroke-width="0.5" >2</text>
<text x="925.25" y="706" font-size="18.16" fill="#ffff00" font-family="'Liberation Sans',sans-serif" textLength="11" lengthAdjust="spacingAndGlyphs" stroke="#000" stroke-width="0.5" >01</text>
</g>
<rect x="0" y="0" width="1048" height="13" fill="#f0f0f0"/>
<rect x="0" y="13" width="1048" height="1" fill="#a9a9a9"/>
<rect x="0" y="14" width="1048" height="1" fill="#e9e9e9"/>
<rect x="0" y="15" width="1048" height="1" fill="#bdbdbd"/>
<rect x="0" y="16" width="1048" height="1" fill="#5a5a5a"/>
<rect x="0" y="0" width="134" height="11.5" fill="#fff"/>
<path d="M123 1h7v1h-1v1h-1v1h-1v1h-1v-1h-1v-1h-1v-1h-1z" fill="#000"/>
<rect x="200" y="0" width="148" height="11.5" fill="#fff"/>
<path d="M337 1h7v1h-1v1h-1v1h-1v1h-1v-1h-1v-1h-1v-1h-1z" fill="#000"/>
<rect x="356" y="0" width="158" height="11.5" fill="#fff"/>
<path d="M503 1h7v1h-1v1h-1v1h-1v1h-1v-1h-1v-1h-1v-1h-1z" fill="#000"/>
<rect x="522" y="0" width="123" height="11.5" fill="#fff"/>
<path d="M633.5 1h7v1h-1v1h-1v1h-1v1h-1v-1h-1v-1h-1v-1h-1z" fill="#000"/>
<rect x="184" y="0" width="1" height="13" fill="#a0a0a0"/><rect x="185" y="0" width="1" height="13" fill="#fff"/>
<rect x="189" y="0" width="2" height="12" fill="#fff"/><rect x="191" y="0" width="1" height="12" fill="#ababab"/>
<rect x="193" y="0" width="2" height="12" fill="#fff"/><rect x="195" y="0" width="1" height="12" fill="#ababab"/>
<rect x="349" y="0" width="5" height="12" fill="#f6f6f6"/><rect x="350" y="0" width="1" height="12" fill="#d4d4d4"/><rect x="351" y="0" width="1" height="12" fill="#808080"/><rect x="352" y="0" width="1" height="12" fill="#d4d4d4"/>
<rect x="515" y="0" width="5" height="12" fill="#f6f6f6"/><rect x="516" y="0" width="1" height="12" fill="#d4d4d4"/><rect x="517" y="0" width="1" height="12" fill="#808080"/><rect x="518" y="0" width="1" height="12" fill="#d4d4d4"/>
<rect x="646" y="0" width="5" height="12" fill="#f6f6f6"/><rect x="647" y="0" width="1" height="12" fill="#d4d4d4"/><rect x="648" y="0" width="1" height="12" fill="#808080"/><rect x="649" y="0" width="1" height="12" fill="#d4d4d4"/>
<g shape-rendering="auto"><path d="M138.3 2.8L146 -0.5L153.8 4.1L146.4 7.5Z" fill="#f2d500"/><path d="M138.3 2.9L146.4 7.6L153.8 4.2" stroke="#a88a08" stroke-width="0.9" fill="none"/><path d="M139 -0.5L146 2.7L153 -0.3L153 -2L139 -2Z" fill="#a4c1e6"/><path d="M139.5 0L146 2.9L152.6 0.1" stroke="#6f93c4" stroke-width="0.7" fill="none"/><path d="M138.3 9.8L141.4 6.9" stroke="#1b2d78" stroke-width="1.3"/><path d="M142.4 5.8L139.4 6.2L142 8.8Z" fill="#1b2d78"/><path d="M161.2 1.5L169 -2L177 2L177 4.8L170 8.8L161.2 4.2Z" fill="#b4cdea"/><path d="M161.2 2.2L170 6.3L177 2.8M161.2 3.8L170 8.2L177 4.5" stroke="#7a9ccc" stroke-width="0.6" fill="none"/><path d="M165 -1H169.2V1L167.1 3.3L165 1Z" fill="#1b2d78"/></g>
<rect x="205.5" y="-3.5" width="9" height="10" fill="#fff" stroke="#000"/><path d="M206 -3h8.5v9.5z" fill="#000"/>
<text filter="url(#crisp)" x="219.3" y="6.9" font-size="11.5" fill="#000" font-family="'Liberation Sans','Noto Sans CJK SC',sans-serif">白</text>
<rect x="360" y="2" width="60" height="1" fill="#000"/>
<text x="425" y="5.5" font-size="12" fill="#000" font-family="'Liberation Mono',monospace" textLength="41" lengthAdjust="spacingAndGlyphs">ByLayer</text>
<rect x="526" y="0" width="35" height="4" fill="#000"/>
<text x="566" y="5.5" font-size="12" fill="#000" font-family="'Liberation Mono','Noto Sans CJK SC',monospace" textLength="53.5" lengthAdjust="spacingAndGlyphs">0.40 毫米</text>
<rect x="653.5" y="-2.5" width="122" height="14" fill="#f0f0f0" stroke="#b4b4b4"/>
<rect x="655" y="0" width="98" height="10.5" fill="#ebebeb"/><rect x="753" y="0" width="21" height="10.5" fill="#f7f7f7"/>
<path d="M759.5 1.5h8l-4 4z" fill="#a8a8a8" shape-rendering="auto"/>
<text filter="url(#crisp)" x="662" y="6.5" font-size="12" fill="#8c8c8c" font-family="'Liberation Sans','Noto Sans CJK SC',sans-serif" textLength="35" lengthAdjust="spacingAndGlyphs">随颜色</text>
<rect x="0" y="739" width="1048" height="4" fill="#f0f0f0"/>
<rect x="0" y="739" width="1048" height="1" fill="#fbfbfb"/>
<rect x="984" y="740" width="64" height="3" fill="#ffffff"/>
<text x="-10.5" y="749.3" font-size="12" fill="#000" font-family="'Liberation Mono',monospace" textLength="78" lengthAdjust="spacingAndGlyphs">Title Block {</text>
</svg>
</body></html>
